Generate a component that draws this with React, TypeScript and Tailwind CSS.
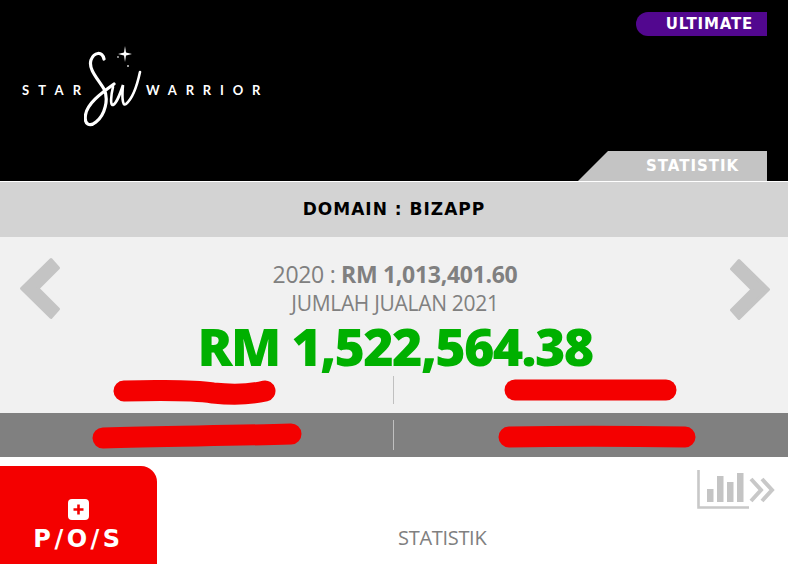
import React from "react";

const Chevron = ({ flip }: { flip?: boolean }) => (
  <svg width="44" height="66" viewBox="0 0 44 66" className={flip ? "rotate-180" : ""}>
    <path d="M3.5 32.5 L33 3.5 L40.5 12 L20 32.5 L40.5 53 L33 61.5 Z" fill="#c4c4c4" stroke="#c4c4c4" strokeWidth="3" strokeLinejoin="round" />
  </svg>
);

const Scribble = ({ d, w, h, className }: { d: string; w: number; h: number; className?: string }) => (
  <svg width={w} height={h} viewBox={`0 0 ${w} ${h}`} className={"block " + (className ?? "")}>
    <path d={d} fill="none" stroke="#f40000" strokeWidth="21" strokeLinecap="round" strokeLinejoin="round" />
  </svg>
);

const Logo = () => (
  <div className="relative flex items-center w-[241px] h-[80px] text-white font-['Lato',sans-serif] font-bold text-[13px] leading-none">
    <span className="tracking-[9.2px] w-[62px] mt-[10px]">STAR</span>
    <svg width="60" height="80" viewBox="0 0 60 80" className="shrink-0 mt-[8px]">
      <path
        d="M20 10 C18 2 10 3 7 11 C4 20 14 30 20 40 C25 50 21 66 12 73 C6 78 0 76 1.5 66 C3 55 16 45 30 35"
        fill="none"
        stroke="#fff"
        strokeWidth="3.2"
        strokeLinecap="round"
      />
      <path d="M29 38 C27 46 26 57 29 56 C33 54 36 45 39 36 C38 46 38 58 42 55 C48 50 53 37 56 23" fill="none" stroke="#fff" strokeWidth="2.6" strokeLinecap="round" />
    </svg>
    <span className="tracking-[8.8px] ml-[2px] mt-[10px]">WARRIOR</span>
    <svg width="18" height="24" viewBox="0 0 18 24" className="absolute left-[94px] top-[1px]">
      <path d="M9 0 L10 6.5 L16 8 L10 9.5 L9 16 L8 9.5 L2 8 L8 6.5 Z" fill="#fff" />
      <circle cx="2" cy="11" r="0.9" fill="#bbb" />
      <circle cx="12" cy="20" r="1" fill="#ccc" />
    </svg>
  </div>
);

export default function App() {
  return (
    <div className="w-[788px] h-[564px] overflow-hidden bg-white font-['DejaVu_Sans',sans-serif]">
      <header className="relative h-[181px] bg-black flex flex-col">
        <div className="flex justify-end pt-[12px] pr-[21px]">
          <div className="w-[131px] h-[24px] bg-[#52078f] rounded-l-full flex items-center justify-end pr-[14px] text-white font-bold text-[15px] tracking-[0.8px] leading-none">
            ULTIMATE
          </div>
        </div>
        <div className="pl-[22px] pt-[9px]">
          <Logo />
        </div>
        <div className="mt-auto flex justify-end pr-[21px]">
          <div className="w-[189px] h-[30px] bg-[#c4c4c4] [clip-path:polygon(30px_0,100%_0,100%_100%,0_100%)] flex items-center justify-end pr-[28px] text-white font-bold text-[15px] tracking-[0.95px] leading-none">
            STATISTIK
          </div>
        </div>
      </header>
      <div className="h-[1px] bg-white" />
      <div className="h-[55px] bg-[#d3d3d3] flex items-center justify-center pt-[1px] font-bold text-[17px] tracking-[1px] text-black">
        DOMAIN : BIZAPP
      </div>
      <section className="h-[176px] bg-[#f1f1f1] flex flex-col">
        <div className="h-[130px] flex justify-between items-start pl-[18px] pr-[16px] pt-[19px]">
          <Chevron />
          <div className="flex flex-col items-center font-['Open_Sans',sans-serif] text-[#808080] pt-[3px]">
            <div className="text-[23px] leading-[30px] tracking-[-0.3px]">
              2020 : <span className="font-bold">RM 1,013,401.60</span>
            </div>
            <div className="text-[21px] leading-[28px] tracking-[-0.3px]">JUMLAH JUALAN 2021</div>
            <div className="text-[52px] leading-[58px] font-extrabold text-[#00b000] tracking-[-1.7px]">RM 1,522,564.38</div>
          </div>
          <Chevron flip />
        </div>
        <div className="flex-1 flex items-center">
          <div className="w-[393px] h-[28px] flex items-center pl-[113px]">
            <Scribble w={164} h={26} className="mt-[6px]" d="M11 11 C50 10 80 10 100 13 C120 15 135 15 152 11" />
          </div>
          <div className="w-[1px] h-[28px] bg-[#c0c0c0]" />
          <div className="flex-1 h-[28px] flex items-center pl-[110px]">
            <Scribble w={174} h={24} className="mt-[1px]" d="M11 11 L162 11" />
          </div>
        </div>
      </section>
      <section className="h-[44px] bg-[#808080] flex items-center">
        <div className="w-[393px] h-[30px] flex items-center pl-[91px]">
          <Scribble w={212} h={28} d="M12 17 C70 15 130 15 200 13" />
        </div>
        <div className="w-[1px] h-[30px] bg-[#c0c0c0]" />
        <div className="flex-1 h-[30px] flex items-center pl-[104px]">
          <Scribble w={198} h={24} className="mt-[4px]" d="M11 12 C60 11 130 11 187 12" />
        </div>
      </section>
      <section className="h-[107px] pt-[9px] flex">
        <div className="w-[157px] h-[98px] bg-[#f40000] rounded-tr-[16px] flex flex-col items-center pt-[33px] text-white">
          <div className="w-[21px] h-[21px] rounded-[4px] bg-white flex items-center justify-center">
            <svg width="13" height="13" viewBox="0 0 13 13">
              <path d="M6.5 1.5 V11.5 M1.5 6.5 H11.5" stroke="#f40000" strokeWidth="2.6" />
            </svg>
          </div>
          <div className="font-bold text-[24px] tracking-[3.5px] leading-[30px] mt-[4px]">P/O/S</div>
        </div>
        <div className="flex-1 flex flex-col pr-[13px] pt-[3px]">
          <svg width="78" height="42" viewBox="0 0 78 42" className="self-end">
            <path d="M1.5 1 V38.5 H52" fill="none" stroke="#c8c8c8" strokeWidth="2.6" />
            <rect x="10" y="20" width="6.5" height="13" fill="#c4c4c4" />
            <rect x="20" y="7" width="6.5" height="26" fill="#c4c4c4" />
            <rect x="30" y="13" width="6.5" height="20" fill="#c4c4c4" />
            <rect x="40" y="4" width="6.5" height="29" fill="#c4c4c4" />
            <path d="M54 10 L64 21 L54 32 M65 10 L75 21 L65 32" fill="none" stroke="#c8c8c8" strokeWidth="4" />
          </svg>
          <div className="pl-[241px] mt-[15px] font-['Open_Sans',sans-serif] text-[#808080] text-[20px] leading-[24px] tracking-[-0.3px]">
            STATISTIK
          </div>
        </div>
      </section>
    </div>
  );
}
